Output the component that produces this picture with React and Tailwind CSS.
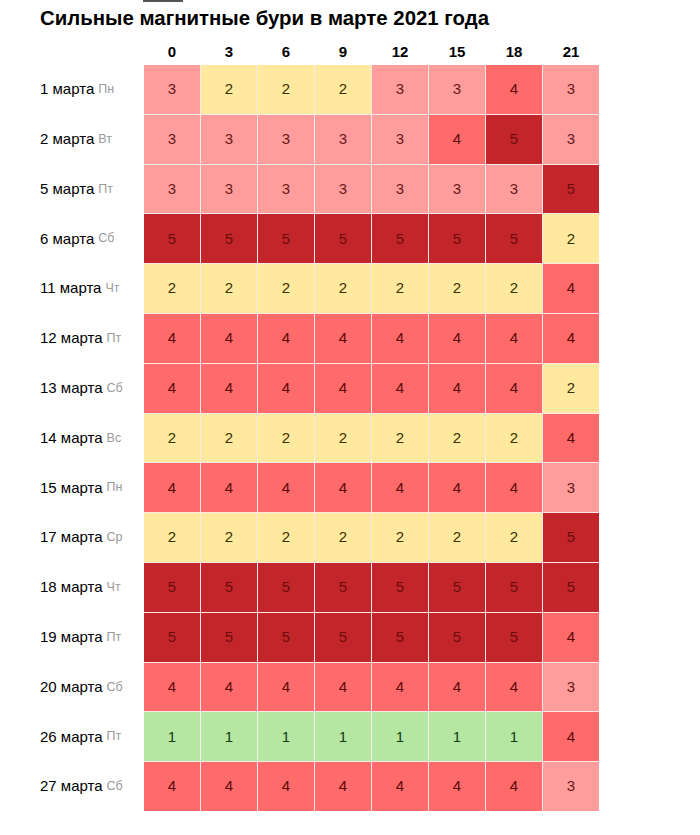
import React from "react";

const rows = [
  ["1 марта", "Пн", [3, 2, 2, 2, 3, 3, 4, 3]],
  ["2 марта", "Вт", [3, 3, 3, 3, 3, 4, 5, 3]],
  ["5 марта", "Пт", [3, 3, 3, 3, 3, 3, 3, 5]],
  ["6 марта", "Сб", [5, 5, 5, 5, 5, 5, 5, 2]],
  ["11 марта", "Чт", [2, 2, 2, 2, 2, 2, 2, 4]],
  ["12 марта", "Пт", [4, 4, 4, 4, 4, 4, 4, 4]],
  ["13 марта", "Сб", [4, 4, 4, 4, 4, 4, 4, 2]],
  ["14 марта", "Вс", [2, 2, 2, 2, 2, 2, 2, 4]],
  ["15 марта", "Пн", [4, 4, 4, 4, 4, 4, 4, 3]],
  ["17 марта", "Ср", [2, 2, 2, 2, 2, 2, 2, 5]],
  ["18 марта", "Чт", [5, 5, 5, 5, 5, 5, 5, 5]],
  ["19 марта", "Пт", [5, 5, 5, 5, 5, 5, 5, 4]],
  ["20 марта", "Сб", [4, 4, 4, 4, 4, 4, 4, 3]],
  ["26 марта", "Пт", [1, 1, 1, 1, 1, 1, 1, 4]],
  ["27 марта", "Сб", [4, 4, 4, 4, 4, 4, 4, 3]],
];

const hours = [0, 3, 6, 9, 12, 15, 18, 21];

const cellCls = {
  1: "bg-[#b5e6a2] text-[#143d10]",
  2: "bg-[#fee99f] text-[#3b3100]",
  3: "bg-[#ff9d9d] text-[#6b1818]",
  4: "bg-[#ff6a6a] text-[#5a0808]",
  5: "bg-[#c2262a] text-[#6e0c0c]",
};

export default function App() {
  return (
    <div className="w-[700px] h-[835px] bg-white relative font-['Liberation_Sans',Arial,sans-serif] text-black">
      <div className="absolute left-[143px] top-0 w-[40px] h-[2px] bg-[#555]" />
      <div className="pl-[40px] pt-[6px]">
        <h1 className="text-[20.4px] font-bold leading-[24px]">
          Сильные магнитные бури в марте 2021 года
        </h1>
        <div className="flex mt-[12px]">
          <div className="w-[104px]" />
          <div className="grid grid-cols-[repeat(8,56px)] gap-x-px">
            {hours.map((h) => (
              <div key={h} className="text-center text-[15px] font-bold leading-[20px] h-[23px]">
                {h}
              </div>
            ))}
          </div>
        </div>
        <div className="flex">
          <div className="w-[104px] flex flex-col gap-y-px">
            {rows.map(([d, w]) => (
              <div key={d} className="h-[48.8px] flex items-center text-[15px]">
                <span>{d}</span>
                <span className="ml-[4px] text-[12.5px] text-[#9a9a9a]">{w}</span>
              </div>
            ))}
          </div>
          <div className="grid grid-cols-[repeat(8,56px)] auto-rows-[48.8px] gap-px bg-[#fbe9e9]">
            {rows.map(([d, , vals]) =>
              vals.map((v, i) => (
                <div
                  key={d + i}
                  className={`flex items-center justify-center text-[15px] ${cellCls[v]}`}
                >
                  {v}
                </div>
              ))
            )}
          </div>
        </div>
      </div>
    </div>
  );
}
